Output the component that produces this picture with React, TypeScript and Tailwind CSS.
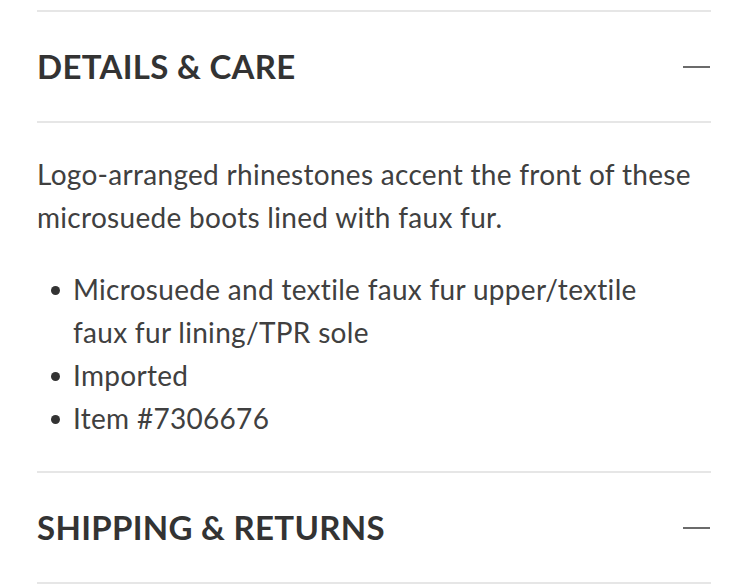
const bullets = [
  "Microsuede and textile faux fur upper/textile faux fur lining/TPR sole",
  "Imported",
  "Item #7306676",
];

function SectionHeader({ title }: { title: string }) {
  return (
    <div className="flex items-center justify-between h-[111px] border-b-2 border-[#e6e6e6]">
      <h2 className="text-[33px] font-bold tracking-[0.3px] text-[#333333] leading-none">
        {title}
      </h2>
      <span className="block w-[27px] h-[2px] bg-[#6b6b6b] mr-[1px]"></span>
    </div>
  );
}

export default function App() {
  return (
    <div
      className="w-[746px] h-[586px] bg-white overflow-hidden"
      style={{ fontFamily: "Lato, 'Open Sans', sans-serif" }}
    >
      <div className="ml-[37px] mr-[35px] pt-[10px]">
        <div className="border-t-2 border-[#e6e6e6]"></div>

        {/* Details & Care */}
        <SectionHeader title="DETAILS & CARE" />

        <div className="pt-[30px] pb-[31px] border-b-2 border-[#e6e6e6] text-[28px] tracking-[0.3px] leading-[43px] text-[#404040]">
          <p>
            Logo-arranged rhinestones accent the front of these microsuede boots lined with faux fur.
          </p>
          <ul className="mt-[29px] pl-[36px] pr-[60px]">
            {bullets.map((b) => (
              <li key={b} className="relative">
                <span className="absolute left-[-22px] top-[18px] w-[9px] h-[9px] rounded-full bg-[#333333]"></span>
                {b}
              </li>
            ))}
          </ul>
        </div>

        {/* Shipping & Returns */}
        <SectionHeader title="SHIPPING & RETURNS" />
      </div>
    </div>
  );
}
